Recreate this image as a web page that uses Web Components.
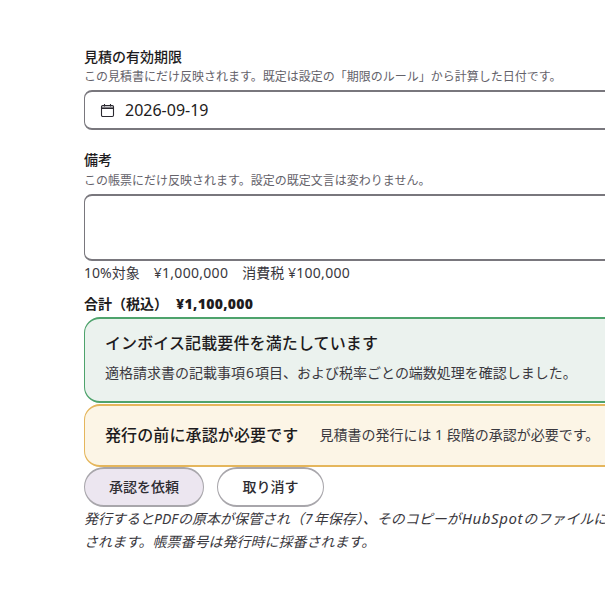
<!DOCTYPE html>
<html lang="ja">
<head>
<meta charset="utf-8">
<style>
  html, body { margin: 0; background: #fff; }
  body { font-family: "Noto Sans", "Noto Sans CJK JP", sans-serif; color: #1d1b20; }
  quote-form { width: 605px; height: 608px; }
</style>
</head>
<body>
<quote-form>
  <form-field label="見積の有効期限" hint="この見積書にだけ反映されます。既定は設定の「期限のルール」から計算した日付です。">
    <date-box value="2026-09-19"></date-box>
  </form-field>
  <form-field class="notes" label="備考" hint="この帳票にだけ反映されます。設定の既定文言は変わりません。">
    <note-box></note-box>
  </form-field>
  <tax-summary></tax-summary>
  <status-card tone="ok" title="インボイス記載要件を満たしています" stacked>適格請求書の記載事項<span class="n">6</span>項目、および税率ごとの端数処理を確認しました。</status-card>
  <status-card tone="warn" title="発行の前に承認が必要です">見積書の発行には 1 段階の承認が必要です。</status-card>
  <action-row></action-row>
  <foot-note></foot-note>
</quote-form>
<script>
class QuoteForm extends HTMLElement {
  constructor() {
    super();
    this.attachShadow({mode: 'open'}).innerHTML = `
      <style>
        :host { display: block; overflow: hidden; }
        .wrap { width: 560px; margin-left: 84px; padding-top: 47px; }
        ::slotted(status-card) { letter-spacing: 0; }
      </style>
      <div class="wrap"><slot></slot></div>`;
  }
}
class FormField extends HTMLElement {
  constructor() {
    super();
    this.attachShadow({mode: 'open'}).innerHTML = `
      <style>
        :host { display: block; margin-bottom: 20px; }
        .label { font-size: 14px; line-height: 20px; font-weight: 500; color: #1d1b20; }
        .hint { font-size: 12px; line-height: 18px; margin: 1px 0 4px; color: #64626a; white-space: nowrap; }
        :host(.notes) .hint { margin: 2px 0 4px; }
      </style>
      <div class="label"></div>
      <div class="hint"></div>
      <slot></slot>`;
  }
  connectedCallback() {
    this.shadowRoot.querySelector('.label').textContent = this.getAttribute('label');
    this.shadowRoot.querySelector('.hint').textContent = this.getAttribute('hint');
  }
}
class DateBox extends HTMLElement {
  constructor() {
    super();
    this.attachShadow({mode: 'open'}).innerHTML = `
      <style>
        :host { display: flex; align-items: center; gap: 10px; box-sizing: border-box; height: 40px; padding-left: 15px;
          border: solid #79777d; border-width: 2px 1px; border-radius: 8px; font-size: 16px; color: #1d1b20; }
        svg { display: block; }
      </style>
      <svg width="15" height="15" viewBox="0 0 15 15" fill="none" stroke="#2b2930" stroke-width="1.1">
        <rect x="1.5" y="2.6" width="12" height="10.9" rx="1.2"/>
        <path d="M1.5 5.2h12" stroke-width="1.6"/>
        <path d="M4.5 1v2.6M10.5 1v2.6"/>
      </svg>
      <span></span>`;
  }
  connectedCallback() {
    this.shadowRoot.querySelector('span').textContent = this.getAttribute('value');
  }
}
class NoteBox extends HTMLElement {
  constructor() {
    super();
    this.attachShadow({mode: 'open'}).innerHTML = `
      <style>
        :host { display: block; box-sizing: border-box; height: 67px; border: solid #79777d; border-width: 2px 1px; border-radius: 8px; }
      </style>`;
  }
}
class TaxSummary extends HTMLElement {
  constructor() {
    super();
    this.attachShadow({mode: 'open'}).innerHTML = `
      <style>
        :host { display: block; margin-top: -19px; }
        .rates { font-size: 14px; line-height: 22px; color: #3a383e; }
        .rates b { font-weight: 400; letter-spacing: .3px; }
        .total { font-size: 14px; line-height: 20px; font-weight: 700; margin-top: 10px; }
        .total b { letter-spacing: .3px; margin-left: 8px; }
        .gap { margin-right: 14px; }
      </style>
      <div class="rates"><span class="gap">10%対象</span><b class="gap">¥1,000,000</b>消費税 <b>¥100,000</b></div>
      <div class="total">合計（税込）<b>¥1,100,000</b></div>`;
  }
}
class StatusCard extends HTMLElement {
  static get observedAttributes() { return ['title']; }
  constructor() {
    super();
    this.attachShadow({mode: 'open'}).innerHTML = `
      <style>
        :host { display: flex; align-items: center; gap: 21px; box-sizing: border-box; padding: 0 20px 2px; white-space: nowrap; border-radius: 16px; border-style: solid; border-width: 2px 1px; }
        :host([tone="ok"]) { height: 86px; background: #ebf2ee; border-color: #4ea36c; margin-top: 3px; }
        :host([tone="warn"]) { height: 63px; background: #fcf5e6; border-color: #e5b65c; margin-top: 1px; }
        :host([stacked]) { flex-direction: column; align-items: flex-start; justify-content: center; gap: 9px; padding-bottom: 5px; }
        .title { font-size: 16px; line-height: 22px; font-weight: 500; color: #1d1b20; letter-spacing: .12px; }
        .body { font-size: 14px; line-height: 20px; color: #3a383e; }
        ::slotted(.n) { margin: 0 1px; }
      </style>
      <div class="title"></div>
      <div class="body"><slot></slot></div>`;
  }
  attributeChangedCallback(name, old, val) {
    this.shadowRoot.querySelector('.title').textContent = val;
  }
}
class ActionRow extends HTMLElement {
  constructor() {
    super();
    this.attachShadow({mode: 'open'}).innerHTML = `
      <style>
        :host { display: flex; gap: 13px; margin-top: 0; }
        button { box-sizing: border-box; height: 40px; border-radius: 20px; border: solid #a8a6ab; border-width: 2px 1px; font: inherit; font-size: 14px; font-weight: 500; color: #2e2c32; padding: 0 0 3px; }
        .primary { width: 120px; background: #ece6f0; }
        .plain { width: 107px; background: #fff; }
      </style>
      <button class="primary">承認を依頼</button>
      <button class="plain">取り消す</button>`;
  }
}
class FootNote extends HTMLElement {
  constructor() {
    super();
    this.attachShadow({mode: 'open'}).innerHTML = `
      <style>
        :host { display: block; font-size: 14px; line-height: 23px; font-style: italic; color: #3a383e; white-space: nowrap; margin-top: 0; }
        .seven { margin: 0 1px; }
        .brand { font-size: 15px; letter-spacing: .6px; margin-left: 1px; }
      </style>
      発行するとPDFの原本が保管され（<span class="seven">7</span>年保存）、そのコピーが<span class="brand">HubSpot</span>のファイルに添付<br>されます。帳票番号は発行時に採番されます。`;
  }
}
customElements.define('quote-form', QuoteForm);
customElements.define('form-field', FormField);
customElements.define('date-box', DateBox);
customElements.define('note-box', NoteBox);
customElements.define('tax-summary', TaxSummary);
customElements.define('status-card', StatusCard);
customElements.define('action-row', ActionRow);
customElements.define('foot-note', FootNote);
</script>
</body>
</html>
